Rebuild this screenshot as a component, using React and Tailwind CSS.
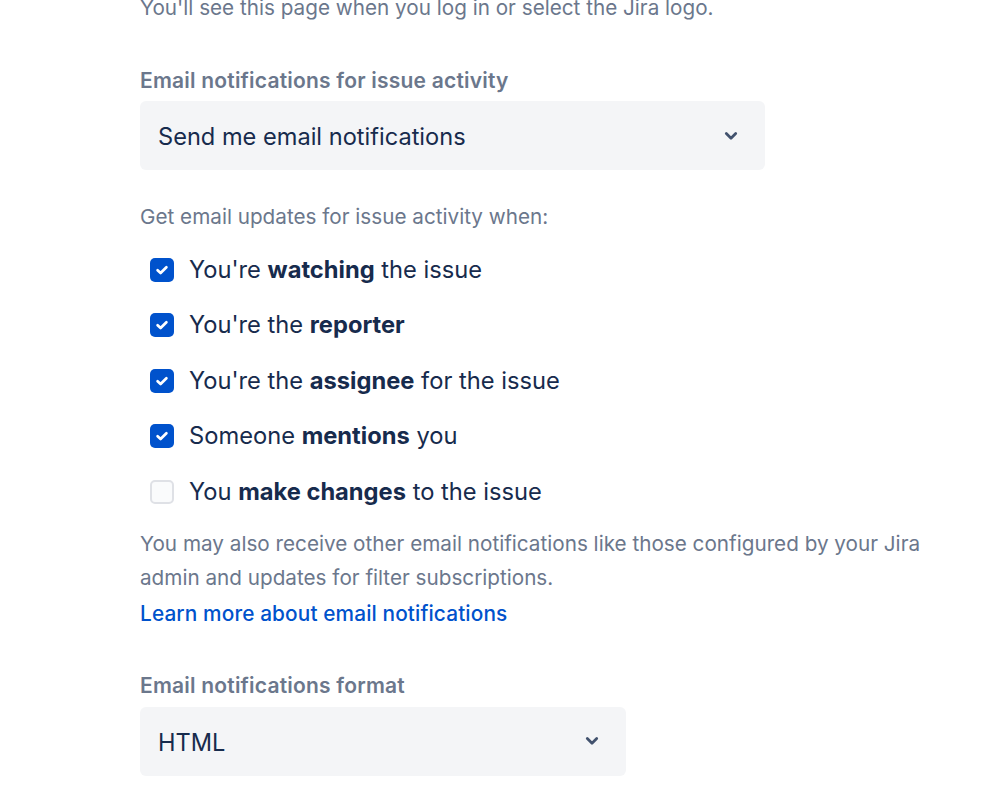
import { useState } from 'react'

/* ── Chevron used in selects ─────────────────────────────────────── */
function Chevron() {
  return (
    <svg width="16" height="16" viewBox="0 0 16 16" className="flex-shrink-0">
      <path d="M3.3 5.6 L8 10.2 L12.7 5.6" fill="none" stroke="#42526E" strokeWidth="2.8" strokeLinecap="round" strokeLinejoin="round" />
    </svg>
  )
}

function Select({ value, width }) {
  return (
    <div className={`${width} h-[69px] rounded-[6px] bg-[#F4F5F7] flex items-center justify-between pl-[18px] pr-[26px]`}>
      <span className="text-[23.6px] leading-[28px] pt-[3px] text-[#172B4D]">{value}</span>
      <Chevron />
    </div>
  )
}

function Checkbox({ checked }) {
  if (!checked) {
    return <span className="w-[24px] h-[24px] rounded-[5px] border-2 border-[#DFE1E6] bg-[#FAFBFC] flex-shrink-0" />
  }
  return (
    <span className="w-[24px] h-[24px] rounded-[5px] bg-[#0052CC] flex items-center justify-center flex-shrink-0">
      <svg width="16" height="16" viewBox="0 0 16 16">
        <path d="M3.6 8.2 L6.6 11 L12.4 5.2" fill="none" stroke="white" strokeWidth="2.7" strokeLinecap="round" strokeLinejoin="round" />
      </svg>
    </span>
  )
}

const OPTIONS = [
  { pre: "You're ", bold: 'watching', post: ' the issue', checked: true },
  { pre: "You're the ", bold: 'reporter', post: '', checked: true },
  { pre: "You're the ", bold: 'assignee', post: ' for the issue', checked: true },
  { pre: 'Someone ', bold: 'mentions', post: ' you', checked: true },
  { pre: 'You ', bold: 'make changes', post: ' to the issue', checked: false },
]

export default function App() {
  const [opts] = useState(OPTIONS)

  return (
    <div className="w-[999px] h-[791px] overflow-hidden bg-white" style={{ fontFamily: 'Inter, "Noto Sans", sans-serif' }}>
      <div className="pl-[140px] pr-[40px] -mt-[4px]">
        <p className="text-[20.7px] leading-[24px] text-[#6B778C]">You'll see this page when you log in or select the Jira logo.</p>

        {/* ── Issue activity ── */}
        <p className="mt-[49px] mb-[8px] text-[21px] tracking-[0.01em] leading-[24px] font-semibold text-[#6B778C]">Email notifications for issue activity</p>
        <Select value="Send me email notifications" width="w-[625px]" />

        <p className="mt-[35px] text-[20.7px] leading-[24px] text-[#6B778C]">Get email updates for issue activity when:</p>

        <div className="mt-[13px] pl-[10px]">
          {opts.map(o => (
            <label key={o.bold} className="h-[55.5px] flex items-center gap-[15px]">
              <Checkbox checked={o.checked} />
              <span className="text-[23.7px] text-[#172B4D]">
                {o.pre}<strong className="font-bold">{o.bold}</strong>{o.post}
              </span>
            </label>
          ))}
        </div>

        <p className="mt-[7px] text-[20.7px] leading-[34px] text-[#6B778C] max-w-[800px]">
          You may also receive other email notifications like those configured by your Jira admin and updates for filter subscriptions.
        </p>
        <a className="block mt-[2px] text-[20.8px] tracking-[0.006em] leading-[34px] font-medium text-[#0052CC]">Learn more about email notifications</a>

        {/* ── Format ── */}
        <p className="mt-[43px] mb-[9px] text-[21px] tracking-[0.01em] leading-[24px] font-semibold text-[#6B778C]">Email notifications format</p>
        <Select value="HTML" width="w-[486px]" />
      </div>
    </div>
  )
}
